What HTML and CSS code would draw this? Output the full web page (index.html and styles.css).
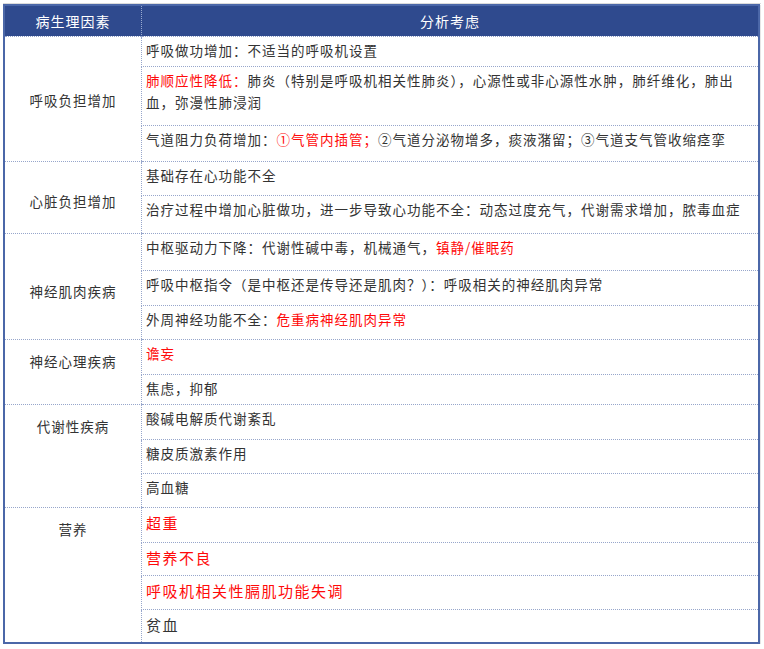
FILE: index.html
```html
<!DOCTYPE html>
<html lang="zh-CN">
<head>
<meta charset="utf-8">
<link rel="stylesheet" href="styles.css">
</head>
<body>
<div class="frame">
<table class="grid">
  <thead>
    <tr class="head">
      <th class="c1">病生理因素</th>
      <th class="c2">分析考虑</th>
    </tr>
  </thead>
  <tbody>
    <tr class="h30">
      <td class="factor g1" rowspan="3">呼吸负担增加</td>
      <td>呼吸做功增加：不适当的呼吸机设置</td>
    </tr>
    <tr class="h59">
      <td><span class="red">肺顺应性降低：</span>肺炎（特别是呼吸机相关性肺炎），心源性或非心源性水肿，肺纤维化，肺出血，弥漫性肺浸润</td>
    </tr>
    <tr class="h36">
      <td>气道阻力负荷增加：<span class="red">①气管内插管；</span>②气道分泌物增多，痰液潴留；③气道支气管收缩痉挛</td>
    </tr>
    <tr class="h34">
      <td class="factor g2" rowspan="2">心脏负担增加</td>
      <td>基础存在心功能不全</td>
    </tr>
    <tr class="h38">
      <td>治疗过程中增加心脏做功，进一步导致心功能不全：动态过度充气，代谢需求增加，脓毒血症</td>
    </tr>
    <tr class="h37">
      <td class="factor g3" rowspan="3">神经肌肉疾病</td>
      <td>中枢驱动力下降：代谢性碱中毒，机械通气，<span class="red">镇静/催眠药</span></td>
    </tr>
    <tr class="h35">
      <td>呼吸中枢指令（是中枢还是传导还是肌肉？）：呼吸相关的神经肌肉异常</td>
    </tr>
    <tr class="h34">
      <td>外周神经功能不全：<span class="red">危重病神经肌肉异常</span></td>
    </tr>
    <tr class="h35">
      <td class="factor g4" rowspan="2">神经心理疾病</td>
      <td><span class="red">谵妄</span></td>
    </tr>
    <tr class="h30">
      <td>焦虑，抑郁</td>
    </tr>
    <tr class="h35">
      <td class="factor g5" rowspan="3">代谢性疾病</td>
      <td>酸碱电解质代谢紊乱</td>
    </tr>
    <tr class="h34">
      <td>糖皮质激素作用</td>
    </tr>
    <tr class="h34">
      <td>高血糖</td>
    </tr>
    <tr class="h35 big">
      <td class="factor g6" rowspan="4">营养</td>
      <td><span class="red">超重</span></td>
    </tr>
    <tr class="h33 big">
      <td><span class="red">营养不良</span></td>
    </tr>
    <tr class="h34 big">
      <td><span class="red">呼吸机相关性膈肌功能失调</span></td>
    </tr>
    <tr class="h34 big">
      <td>贫血</td>
    </tr>
  </tbody>
</table>
</div>
</body>
</html>
```

FILE: styles.css
```css
html, body {
  margin: 0;
  padding: 0;
  background: #ffffff;
}

body {
  padding: 3px 0 0 3px;
  font-family: "Noto Sans CJK SC", "Noto Sans", sans-serif;
  color: #333333;
}

.frame {
  width: 758px;
  border-top: 1px solid #dcdcdc;
}

.grid {
  width: 757px;
  border-collapse: collapse;
  border: 2px solid #4b67a8;
  table-layout: fixed;
  font-size: 13.5px;
  letter-spacing: 1px;
  line-height: 22px;
  box-shadow: 1px 1px 0 #e6e6e6;
}

.grid .c1 {
  width: 136px;
}

.head {
  height: 31px;
  background: #2f4a8e;
  color: #ffffff;
}

.head th {
  font-weight: normal;
  font-size: 14px;
  text-align: center;
  padding: 0;
  border-left: 1px dotted #9aabd0;
}

.head th:first-child {
  border-left: none;
}

.grid td {
  vertical-align: top;
  padding: 2px 16px 0 4px;
  border: 1px dotted #97a6cb;
  border-right: none;
}

.grid td.factor {
  text-align: center;
  padding: 0 4px;
  border-left: none;
}

.g1 { padding-top: 52px !important; }
.g2 { padding-top: 28px !important; }
.g3 { padding-top: 46px !important; }
.g4 { padding-top: 10px !important; }
.g5 { padding-top: 10px !important; }
.g6 { padding-top: 10px !important; }

.big td:not(.factor) {
  font-size: 15px;
  letter-spacing: 1.5px;
  padding-top: 4px;
}

.red {
  color: #ff0a0a;
}

.h30 { height: 30px; }
.h33 { height: 33px; }
.h34 { height: 34px; }
.h35 { height: 35px; }
.h36 { height: 36px; }
.h37 { height: 37px; }
.h38 { height: 38px; }
.h59 { height: 59px; }
```
